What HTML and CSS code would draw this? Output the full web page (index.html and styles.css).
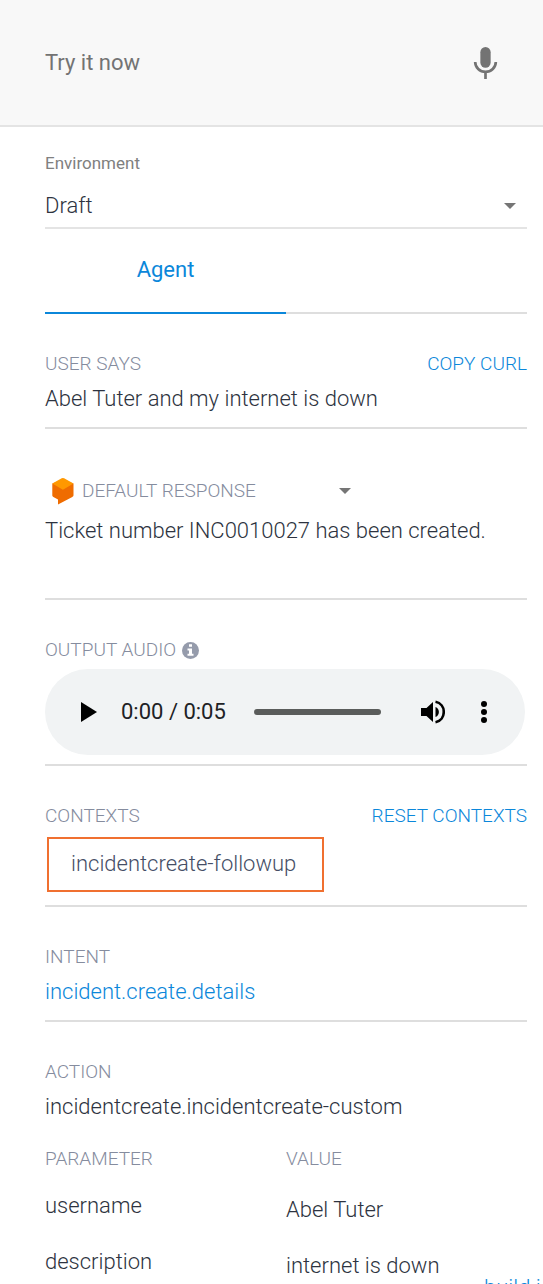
FILE: index.html
```html
<!DOCTYPE html>
<html lang="en">
<head>
<meta charset="utf-8">
<meta name="viewport" content="width=device-width, initial-scale=1">
<title>Try it now</title>
<link rel="stylesheet" href="styles.css">
</head>
<body>
<div class="console">
  <header class="query">
    <input class="query-input" type="text" placeholder="Try it now" aria-label="Try it now">
    <button class="icon-button" type="button" aria-label="Speak">
      <svg class="mic" viewBox="0 0 24 32" aria-hidden="true">
        <rect x="7" y="1" width="10" height="20" rx="5" fill="#737373"/>
        <path d="M2 15.500a10 9.500 0 0 0 20 0M12 25v7" fill="none" stroke="#737373" stroke-width="2.600"/>
      </svg>
    </button>
  </header>

  <main class="content">
    <div class="environment">
      <label class="environment-label" for="environment">Environment</label>
      <div class="select-wrap">
        <select class="environment-select" id="environment"><option>Draft</option></select>
        <span class="caret"></span>
      </div>
    </div>

    <nav class="tabs">
      <button class="tab" type="button">Agent</button>
    </nav>

    <section class="section">
      <div class="section-head">
        <h2 class="label">USER SAYS</h2>
        <a class="action-link" href="#">COPY CURL</a>
      </div>
      <p class="value">Abel Tuter and my internet is down</p>
    </section>

    <section class="section response">
      <div class="response-head">
        <svg class="logo" viewBox="0 0 22 28" aria-hidden="true">
          <path d="M.3 6.500L10.900 3l10.600 3.500V18c0 1-.5 1.500-1.200 2L6 27.500V22.500L1.400 20C.6 19.500.3 19 .3 18z" fill="#ef6c00"/>
          <path d="M.3 6.500L9.700 1.200q1.200-.6 2.400 0L21.500 6.500 10.900 12.700z" fill="#ff9800"/>
        </svg>
        <select class="response-select label" aria-label="Response platform"><option>DEFAULT RESPONSE</option></select>
        <span class="caret"></span>
      </div>
      <p class="value">Ticket number INC0010027 has been created.</p>
    </section>

    <section class="section audio">
      <div class="section-head">
        <h2 class="label">OUTPUT AUDIO
          <svg class="info" viewBox="0 0 17 17" aria-hidden="true">
            <circle cx="8.500" cy="8.500" r="8.500" fill="#959bab"/>
            <path d="M7 2.300h3v2.400H7zM5.500 6.500H10v5.300h1.500v2h-6v-2H7V8.500H5.500z" fill="#fff"/>
          </svg>
        </h2>
      </div>
      <div class="player">
        <button class="icon-button" type="button" aria-label="Play">
          <svg class="play" viewBox="0 0 16 20" aria-hidden="true"><path d="M0 0l16 10L0 20z"/></svg>
        </button>
        <span class="time">0:00 / 0:05</span>
        <input class="seek" type="range" min="0" max="5" value="0" aria-label="Seek">
        <button class="icon-button" type="button" aria-label="Mute">
          <svg class="volume" viewBox="0 0 24 24" aria-hidden="true">
            <path d="M0 8v8h5.500l6.500 6V2L5.500 8z"/>
            <path d="M14.500 7c4.500 1.500 4.500 8.500 0 10z"/>
            <path d="M14.500 1.800c11 2 11 18.400 0 20.400" fill="none" stroke="#000" stroke-width="2.600"/>
          </svg>
        </button>
        <button class="icon-button" type="button" aria-label="More options">
          <svg class="more" viewBox="0 0 6 22" aria-hidden="true"><circle cx="3" cy="3" r="3"/><circle cx="3" cy="11" r="3"/><circle cx="3" cy="19" r="3"/></svg>
        </button>
      </div>
    </section>

    <section class="section">
      <div class="section-head">
        <h2 class="label">CONTEXTS</h2>
        <a class="action-link" href="#">RESET CONTEXTS</a>
      </div>
      <span class="context">incidentcreate-followup</span>
    </section>

    <section class="section">
      <div class="section-head"><h2 class="label">INTENT</h2></div>
      <a class="value intent-link" href="#">incident.create.details</a>
    </section>

    <section class="section last">
      <div class="section-head"><h2 class="label">ACTION</h2></div>
      <p class="value">incidentcreate.incidentcreate-custom</p>
      <table class="params">
        <thead><tr><th class="label">PARAMETER</th><th class="label">VALUE</th></tr></thead>
        <tbody>
          <tr><td class="name">username</td><td class="result">Abel Tuter</td></tr>
          <tr><td class="name">description</td><td class="result">internet is down</td></tr>
        </tbody>
      </table>
    </section>
  </main>
  <a class="build-link" href="#">build i</a>
</div>
</body>
</html>
```

FILE: styles.css
```css
* { box-sizing: border-box; }

body {
  margin: 0;
  background: #fff;
  color: #2d3340;
  font-family: Roboto, "Liberation Sans", sans-serif;
  font-size: 22px;
  font-weight: 300;
  line-height: 30px;
}

h2, p { margin: 0; }
a { text-decoration: none; }
svg { display: block; flex: none; }

button, input, select {
  margin: 0;
  padding: 0;
  border: 0;
  background: none;
  color: inherit;
  font: inherit;
}

select { appearance: none; }

.console {
  height: 100vh;
  overflow: hidden;
}

.query {
  display: flex;
  align-items: center;
  padding: 46px 45px;
  background: #f8f8f8;
  border-bottom: 2px solid #e4e4e4;
}

.query-input {
  flex: 1;
  min-width: 0;
  height: 33px;
  font-weight: 400;
}

.query-input::placeholder { color: #737373; opacity: 1; }
.icon-button { flex: none; }
.mic { width: 25px; height: 33px; }

.content { padding: 0 16px 0 45px; }

.environment {
  padding-top: 26px;
  border-bottom: 2px solid #e4e4e4;
}

.environment-label {
  display: block;
  color: #808080;
  font-size: 17px;
  font-weight: 400;
  line-height: 20px;
}

.select-wrap {
  display: flex;
  align-items: center;
  padding: 18px 11px 6px 0;
}

.environment-select {
  flex: 1;
  height: 30px;
}

.caret {
  border: 6px solid transparent;
  border-top-color: #757575;
  border-bottom: 0;
}

.tabs {
  display: flex;
  border-bottom: 2px solid #dedede;
}

.tab {
  width: 50%;
  margin-bottom: -2px;
  padding: 26px 0 27px;
  border-bottom: 2px solid #0b87da;
  color: #0b87da;
  font-weight: 400;
}

.section {
  display: flex;
  flex-direction: column;
  gap: 8px;
  padding: 38px 0 13px;
  border-bottom: 2px solid #dedede;
}

.section-head {
  display: flex;
  justify-content: space-between;
}

.label, .action-link {
  font-size: 19px;
  font-weight: 300;
  line-height: 24px;
}

.label { color: #858c9e; }
.action-link, .intent-link, .build-link { color: #0b87da; }

.response {
  gap: 13px;
  padding: 50px 0 52px;
}

.response-head {
  display: flex;
  align-items: center;
  width: 306px;
  height: 24px;
  padding-left: 7px;
}

.logo {
  width: 22px;
  height: 28px;
  margin-right: 8px;
}

.response-select { flex: 1; }

.audio {
  gap: 7px;
  padding-bottom: 9px;
}

.audio .label {
  display: flex;
  align-items: center;
  gap: 6px;
}

.info { width: 17px; height: 17px; }

.player {
  display: flex;
  align-items: center;
  height: 86px;
  margin-right: 2px;
  padding: 0 38px 0 36px;
  background: #f1f3f4;
  border-radius: 43px;
}

.play { width: 16px; height: 20px; }

.time {
  margin: 0 28px 0 24px;
  color: #202124;
  font-weight: 400;
}

.seek {
  appearance: none;
  flex: 1;
  min-width: 0;
  height: 6px;
  margin-right: 40px;
  border-radius: 3px;
  background: #5a5c5b;
}

.seek::-webkit-slider-thumb {
  appearance: none;
  width: 6px;
  height: 6px;
}

.volume { width: 24px; height: 24px; margin-right: 36px; }
.more { width: 6px; height: 22px; }

.context {
  align-self: flex-start;
  margin: 1px 2px 0;
  padding: 10px 26px 11px 22px;
  border: 2px solid #f07030;
  color: #454e66;
}

.last {
  padding-bottom: 0;
  border: 0;
}

.params {
  width: 100%;
  margin-top: 17px;
  border-collapse: collapse;
  table-layout: fixed;
}

.params th, .params td {
  padding: 0;
  text-align: left;
  vertical-align: top;
}

.params .name { padding: 20px 0 6px; }
.params .result { padding: 24px 0 2px; }

.build-link {
  display: block;
  margin: -6px 0 0 auto;
  width: 59px;
  line-height: 22px;
  white-space: nowrap;
}
```
